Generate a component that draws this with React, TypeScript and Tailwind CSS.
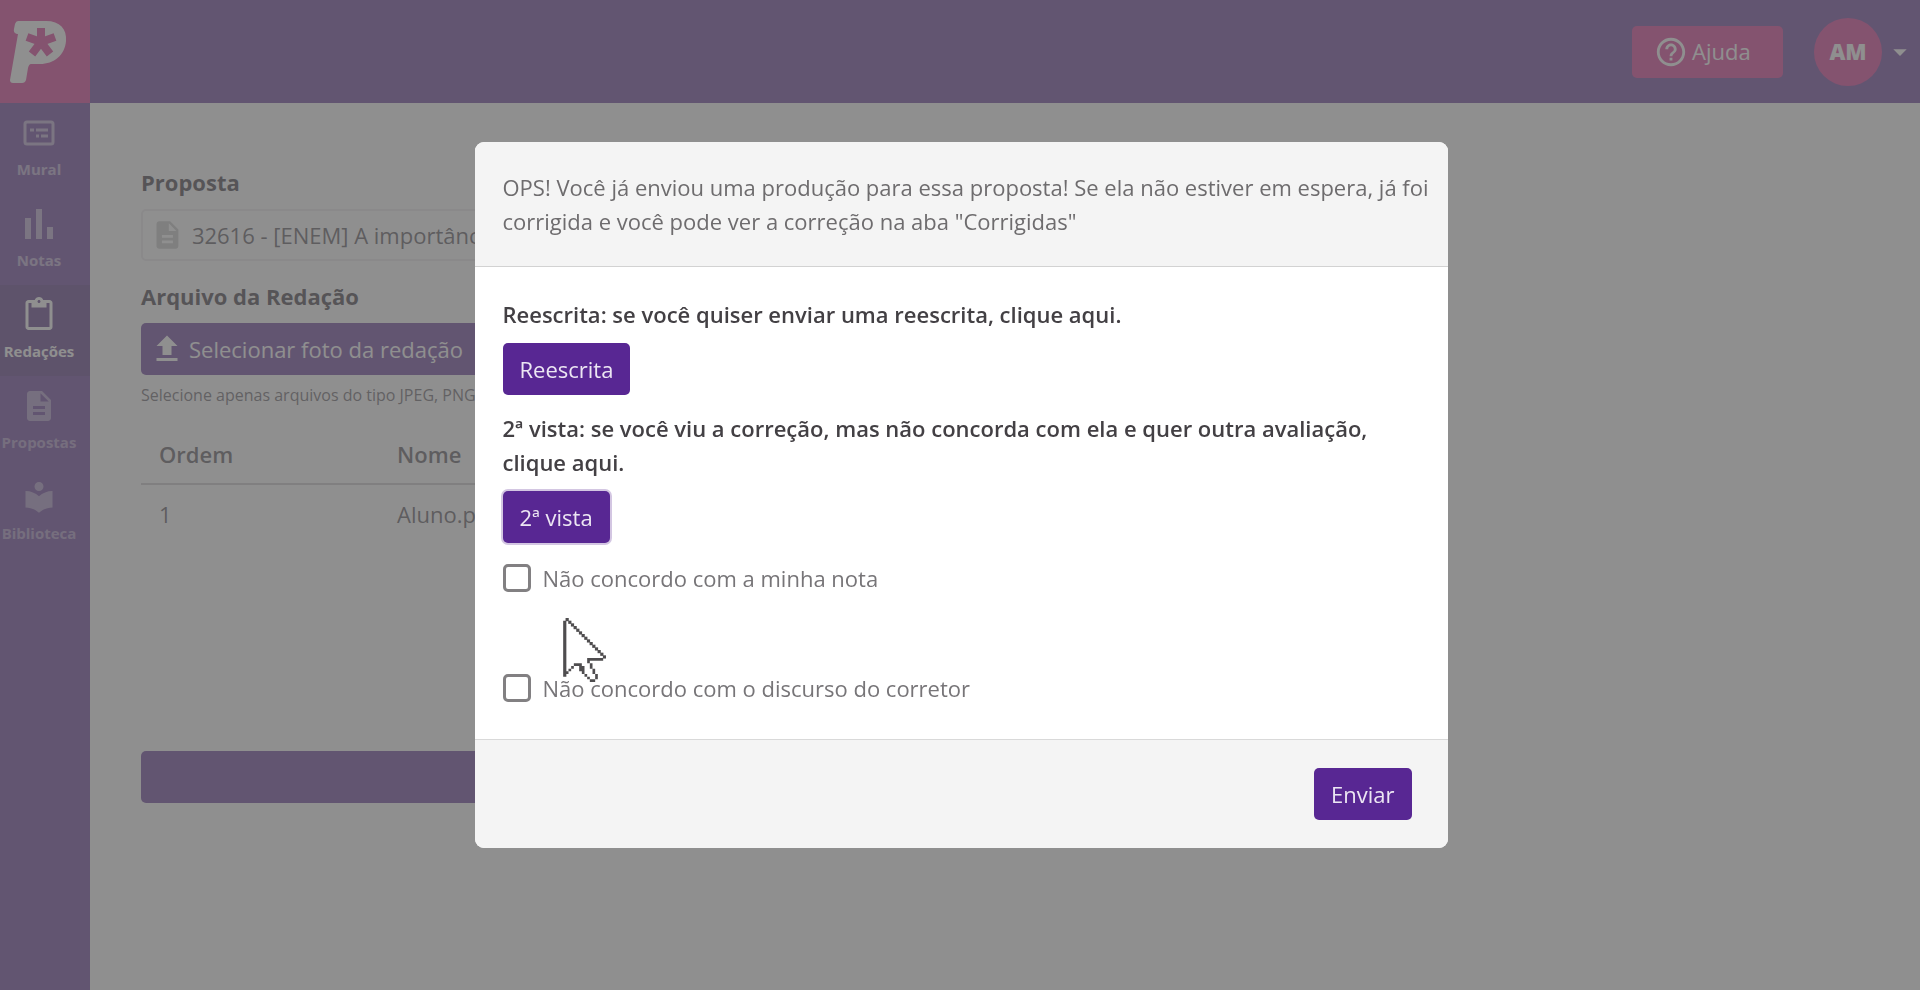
import { useState } from 'react'
import type { ReactNode } from 'react'
import { MdArrowDropDown, MdContentPaste, MdDescription, MdHelpOutline, MdLocalLibrary, MdUpload } from 'react-icons/md'

interface NavItem {
  label: string
  icon: ReactNode
  tone: string
}

const BUTTON_CLS =
  'h-[52px] rounded-[5px] bg-[#582793] px-[17px] text-[22px] leading-[34px] text-[#ece6f3] cursor-pointer'

const NAV_ITEMS: ReadonlyArray<NavItem> = [
  { label: 'Mural', icon: <MuralIcon />, tone: 'text-white/55' },
  { label: 'Notas', icon: <NotasIcon />, tone: 'text-white/55' },
  { label: 'Redações', icon: <MdContentPaste size={36} />, tone: 'bg-black/15 text-white' },
  { label: 'Propostas', icon: <MdDescription size={36} />, tone: 'text-white/45' },
  { label: 'Biblioteca', icon: <MdLocalLibrary size={36} />, tone: 'text-white/45' },
]

const REASONS = [
  { id: 'nota', label: 'Não concordo com a minha nota' },
  { id: 'discurso', label: 'Não concordo com o discurso do corretor' },
]

function MuralIcon() {
  return (
    <svg width="36" height="36" viewBox="0 0 36 36" fill="none" aria-hidden="true">
      <rect x="4" y="7" width="28" height="22" rx="2" stroke="currentColor" strokeWidth="3" />
      <path d="M9 15h4M15 15h12M15 21h3M20 21h7" stroke="currentColor" strokeWidth="3" />
    </svg>
  )
}

function NotasIcon() {
  return (
    <svg width="36" height="36" viewBox="0 0 36 36" fill="currentColor" aria-hidden="true">
      <path d="M4 12h6v21H4zM15 3h6v30h-6zM26 21h6v12h-6z" />
    </svg>
  )
}

function LogoMark() {
  return (
    <svg width="58" height="64" viewBox="0 0 58 64" aria-hidden="true">
      <path
        d="M8 1H36C50 1 57 9 56 21C55 35 44 44 30 44H21Q19 44 18 48L16 60Q15 63 12 63H3Q0 63 0 60L8 14H7Q3 13 4 9L5 4Q6 1 8 1Z"
        fill="#fff"
      />
      <path
        d="M31 22V8M31 22L45 17M31 22L40 34M31 22L22 34M31 22L17 17"
        stroke="#d72189"
        strokeWidth="8"
      />
    </svg>
  )
}

function CursorArrow() {
  return (
    <svg width="43" height="64" viewBox="0 0 16 24" aria-hidden="true">
      <path d="M1 1L15 15H9L12 22V23H10L7 17H5L1 21Z" fill="#fff" />
      <path
        d="M0 1h1.2v21H0zM1 20h1v1H1zM2 19h1v1H2zM3 18h1v1H3zM4 17h3v1H4zM6 18h2v2H6zM7 20h1v1H7zM8 21h1v1H8zM9 22h1v1H9zM10 23h2v1h-2zM12 21h1v2h-1zM11 19h1v2h-1zM10 17h1v2h-1zM9 16h1v1H9zM9 15h6v1H9z"
        fill="#4f4d4f"
      />
      {Array.from({ length: 15 }, (_, i) => (
        <rect key={i} x={i + 0.9} y={i} width="1.2" height="1.2" fill="#4f4d4f" />
      ))}
    </svg>
  )
}

function TopBar() {
  return (
    <header className="flex h-[103px] items-center justify-between bg-[#5a2a91]">
      <a href="#inicio" aria-label="Início" className="flex h-full w-[90px] items-center bg-[#d72189] pl-[10px]">
        <LogoMark />
      </a>
      <div className="flex items-center pr-1">
        <button
          type="button"
          className="mr-[31px] flex h-[52px] w-[151px] items-center gap-1 rounded-[5px] bg-[#d72189] pl-[22px] text-[22px] text-white"
        >
          <MdHelpOutline size={34} />
          Ajuda
        </button>
        <button type="button" className="flex items-center gap-0.5 text-white">
          <span className="flex size-[68px] items-center justify-center rounded-full bg-[#d72189] text-[22px] font-extrabold">
            AM
          </span>
          <MdArrowDropDown size={32} />
        </button>
      </div>
    </header>
  )
}

function SideNav() {
  return (
    <nav className="w-[90px] shrink-0 bg-[#5a2a91]">
      {NAV_ITEMS.map((item) => (
        <a
          key={item.label}
          href={`#${item.label}`}
          className={`flex h-[91px] flex-col items-center gap-1.5 pt-3 pr-3 text-[15px] leading-6 font-bold ${item.tone}`}
        >
          {item.icon}
          {item.label}
        </a>
      ))}
    </nav>
  )
}

function UploadForm() {
  return (
    <main className="w-full max-w-[1300px] pt-[62px] pl-[51px]">
      <label htmlFor="proposta" className="block text-[22px] leading-[34px] font-bold text-[#2d2830]">
        Proposta
      </label>
      <div className="mt-[10px] flex h-[52px] items-center gap-2 rounded-[5px] border-2 border-[#ebe8ec] bg-white pl-2 text-[#c4c4c4]">
        <MdDescription size={34} />
        <input
          id="proposta"
          readOnly
          value="32616 - [ENEM] A importância da leitura"
          className="w-full text-[22px] text-[#4c464e] outline-none"
        />
      </div>
      <h2 className="mt-[18px] text-[22px] leading-[34px] font-bold text-[#2d2830]">Arquivo da Redação</h2>
      <button
        type="button"
        className="mt-[10px] flex h-[52px] items-center gap-1 rounded-[5px] bg-[#5a2a91] pr-[18px] pl-2 text-[22px] text-white"
      >
        <MdUpload size={36} />
        Selecionar foto da redação
      </button>
      <p className="mt-2 text-[16px] leading-6 text-[#5b565d]">Selecione apenas arquivos do tipo JPEG, PNG</p>
      <table className="mt-[18px] w-full table-fixed text-left text-[22px] leading-[34px] text-[#4c464e]">
        <thead>
          <tr className="border-b-2 border-[#c6c2c8]">
            <th className="w-[238px] px-[18px] py-3 font-semibold">Ordem</th>
            <th className="px-[18px] py-3 font-semibold">Nome</th>
          </tr>
        </thead>
        <tbody>
          <tr>
            <td className="px-[18px] py-3">1</td>
            <td className="px-[18px] py-3">Aluno.png</td>
          </tr>
        </tbody>
      </table>
      <button type="button" aria-label="Enviar redação" className="mt-52 block h-[52px] w-full rounded-[5px] bg-[#5a2a91]" />
    </main>
  )
}

function ResubmitDialog() {
  const [checked, setChecked] = useState<Record<string, boolean>>({})

  return (
    <div className="fixed inset-0 flex items-center justify-center bg-[#656565]/73 pl-0.5">
      <section
        role="dialog"
        aria-modal="true"
        aria-labelledby="aviso"
        className="w-full max-w-[973px] overflow-hidden rounded-[9px] bg-white text-[22px] leading-[34px]"
      >
        <header className="border-b border-[#d2d2d2] bg-[#f4f4f4] py-7 pr-2 pl-7">
          <p id="aviso" className="text-[#6e6c6e]">
            OPS! Você já enviou uma produção para essa proposta! Se ela não estiver em espera, já foi corrigida e você
            pode ver a correção na aba "Corrigidas"
          </p>
        </header>
        <div className="px-7 pt-[30px] pb-[34px]">
          <p className="mb-3 font-semibold text-[#434044]">Reescrita: se você quiser enviar uma reescrita, clique aqui.</p>
          <button type="button" className={BUTTON_CLS}>
            Reescrita
          </button>
          <p className="mt-4 mb-3 font-semibold text-[#434044]">
            2ª vista: se você viu a correção, mas não concorda com ela e quer outra avaliação, clique aqui.
          </p>
          <button type="button" className={`${BUTTON_CLS} ring-2 ring-[#d3c6e2]`}>
            2ª vista
          </button>
          <div className="relative mt-[18px] flex flex-col gap-[76px]">
            {REASONS.map((reason) => (
              <label key={reason.id} className="flex items-center gap-3 text-[#777578]">
                <input
                  type="checkbox"
                  checked={checked[reason.id] ?? false}
                  onChange={(e) => setChecked({ ...checked, [reason.id]: e.target.checked })}
                  className="size-7 shrink-0 appearance-none rounded-[5px] border-[3px] border-[#828082] checked:bg-[#582793]"
                />
                {reason.label}
              </label>
            ))}
            <div className="pointer-events-none absolute top-[57px] left-[60px]">
              <CursorArrow />
            </div>
          </div>
        </div>
        <footer className="flex justify-end border-t border-[#d9d9d9] bg-[#f4f4f4] py-7 pr-9">
          <button type="button" className={BUTTON_CLS}>
            Enviar
          </button>
        </footer>
      </section>
    </div>
  )
}

export default function App() {
  return (
    <div className="flex min-h-screen flex-col bg-white font-['Open_Sans','Noto_Sans',sans-serif]">
      <TopBar />
      <div className="flex flex-1">
        <SideNav />
        <UploadForm />
      </div>
      <ResubmitDialog />
    </div>
  )
}
